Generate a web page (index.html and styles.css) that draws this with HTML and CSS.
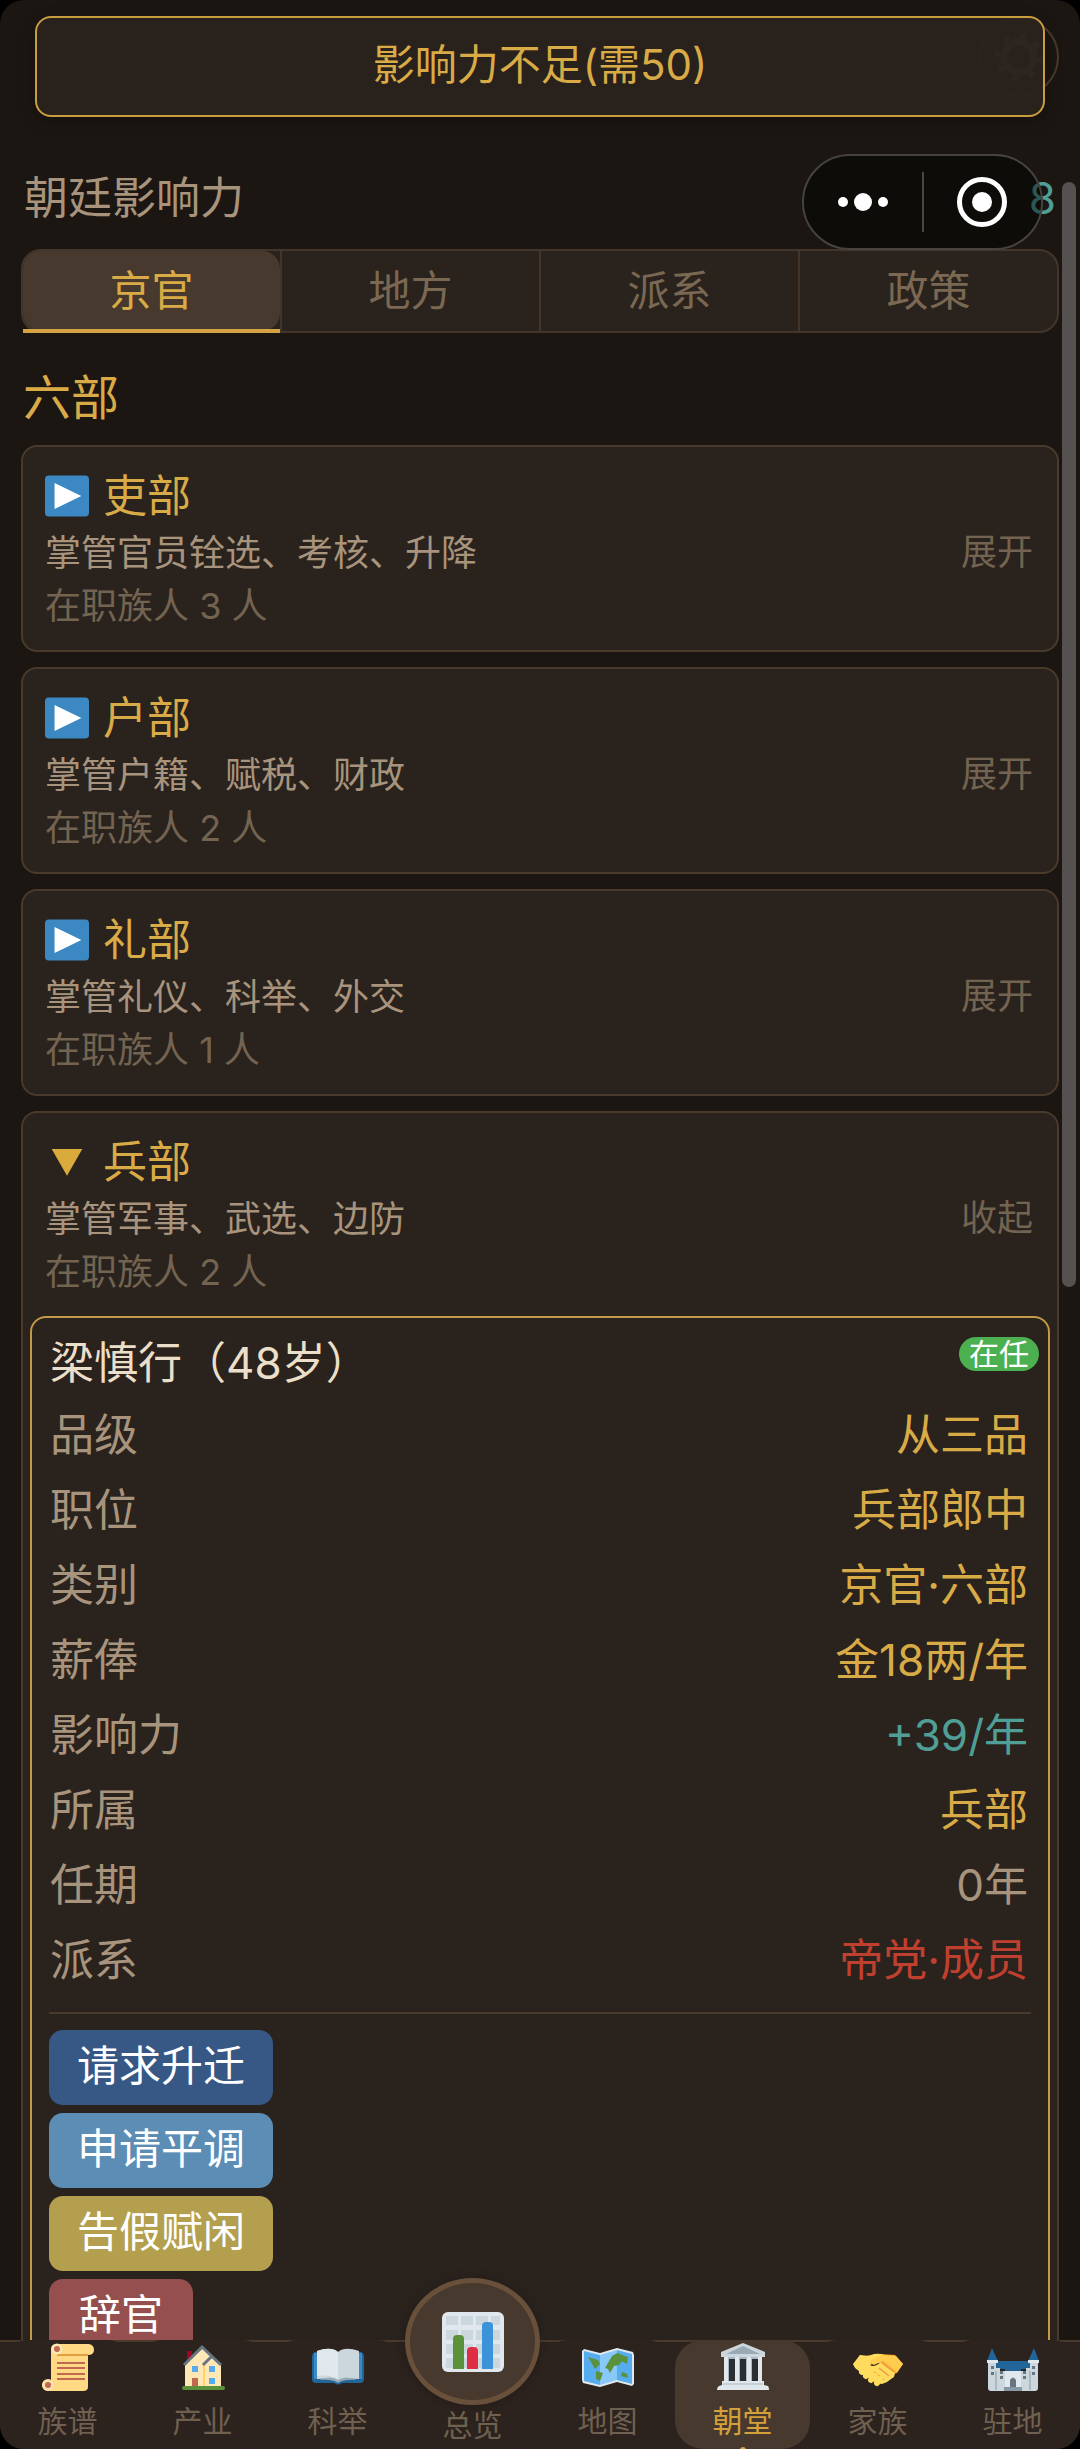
FILE: index.html
```
<!DOCTYPE html>
<html lang="zh-CN">
<head>
    <meta charset="UTF-8">
    <meta name="viewport" content="width=device-width, initial-scale=1.0">
    <title>朝堂</title>
    <link rel="stylesheet" href="styles.css">
</head>
<body>
    <div class="app">
        <main class="page">
            <header class="topbar">
                <button class="settings" aria-label="设置">
                    <svg width="52" height="52" viewBox="0 0 52 52">
                        <circle cx="26" cy="26" r="15" fill="none" stroke="#8a8078" stroke-width="7"/>
                        <circle cx="26" cy="26" r="21" fill="none" stroke="#8a8078" stroke-width="7" stroke-dasharray="6 10.5"/>
                    </svg>
                </button>
            </header>

            <div class="influence">
                <span>朝廷影响力</span>
                <span class="teal">8</span>
            </div>

            <nav class="tabs">
                <button class="tab active">京官</button>
                <button class="tab">地方</button>
                <button class="tab">派系</button>
                <button class="tab">政策</button>
            </nav>

            <h2 class="section-title">六部</h2>

            <div class="ministries">
                <section class="ministry">
                    <button class="ministry-head">
                        <span class="info">
                            <span class="name">
                                <svg class="arrow" viewBox="0 0 46 43"><rect width="46" height="43" rx="4" fill="#3b88c3"/><path d="M10 8v27l28-13.500z" fill="#fff"/></svg>
                                吏部
                            </span>
                            <span class="desc">掌管官员铨选、考核、升降</span>
                            <span class="count">在职族人 3 人</span>
                        </span>
                        <span class="toggle">展开</span>
                    </button>
                </section>

                <section class="ministry">
                    <button class="ministry-head">
                        <span class="info">
                            <span class="name">
                                <svg class="arrow" viewBox="0 0 46 43"><rect width="46" height="43" rx="4" fill="#3b88c3"/><path d="M10 8v27l28-13.500z" fill="#fff"/></svg>
                                户部
                            </span>
                            <span class="desc">掌管户籍、赋税、财政</span>
                            <span class="count">在职族人 2 人</span>
                        </span>
                        <span class="toggle">展开</span>
                    </button>
                </section>

                <section class="ministry">
                    <button class="ministry-head">
                        <span class="info">
                            <span class="name">
                                <svg class="arrow" viewBox="0 0 46 43"><rect width="46" height="43" rx="4" fill="#3b88c3"/><path d="M10 8v27l28-13.500z" fill="#fff"/></svg>
                                礼部
                            </span>
                            <span class="desc">掌管礼仪、科举、外交</span>
                            <span class="count">在职族人 1 人</span>
                        </span>
                        <span class="toggle">展开</span>
                    </button>
                </section>

                <section class="ministry">
                    <button class="ministry-head">
                        <span class="info">
                            <span class="name">
                                <svg class="arrow" viewBox="0 0 46 43"><path d="M7 8h32L23 36z" fill="#d9ab3c"/></svg>
                                兵部
                            </span>
                            <span class="desc">掌管军事、武选、边防</span>
                            <span class="count">在职族人 2 人</span>
                        </span>
                        <span class="toggle">收起</span>
                    </button>

                    <article class="official">
                        <span class="badge">在任</span>
                        <h3 class="official-name">梁慎行（48岁）</h3>
                        <dl class="stats">
                            <div class="stat"><dt>品级</dt><dd>从三品</dd></div>
                            <div class="stat"><dt>职位</dt><dd>兵部郎中</dd></div>
                            <div class="stat"><dt>类别</dt><dd>京官·六部</dd></div>
                            <div class="stat"><dt>薪俸</dt><dd>金18两/年</dd></div>
                            <div class="stat"><dt>影响力</dt><dd class="teal">+39/年</dd></div>
                            <div class="stat"><dt>所属</dt><dd>兵部</dd></div>
                            <div class="stat"><dt>任期</dt><dd class="plain">0年</dd></div>
                            <div class="stat"><dt>派系</dt><dd class="red">帝党·成员</dd></div>
                        </dl>
                        <div class="actions">
                            <button class="btn promote">请求升迁</button>
                            <button class="btn transfer">申请平调</button>
                            <button class="btn leave">告假赋闲</button>
                            <button class="btn resign">辞官</button>
                        </div>
                    </article>
                </section>
            </div>
        </main>

        <nav class="bottom-nav">
            <button class="nav-item">
                <svg class="nav-icon" viewBox="0 0 52 48">
                    <path d="M9 6q0-5 6-5h32q5 1 5 6t-6 5v32q0 4-5 4H7q-6 0-7-6 1-6 9-5z" fill="#ffd983"/>
                    <path d="M15 12h31" stroke="#e39f3d" stroke-width="2"/>
                    <circle cx="15" cy="6" r="5.500" fill="#ffe8b6"/><circle cx="15" cy="6" r="3" fill="#c1694f"/>
                    <circle cx="6" cy="42" r="6" fill="#ffe0ac"/><circle cx="6" cy="42" r="3" fill="#c1694f"/>
                    <path d="M15 20h28M15 25h28M15 31h28M15 36h28" stroke="#c1694f" stroke-width="2"/>
                </svg>
                <span>族谱</span>
            </button>
            <button class="nav-item">
                <svg class="nav-icon" viewBox="0 0 52 48">
                    <rect x="10" y="8" width="5" height="9" fill="#a0041e"/>
                    <path d="M8 21L26 5l18 16v25H8z" fill="#ffe8b6"/>
                    <path d="M27 22v24" stroke="#ffcc4d" stroke-width="1.500"/>
                    <path d="M7 22L25 4l19 18M26 22l9-9" fill="none" stroke="#66757f" stroke-width="3"/>
                    <path d="M15 23h6v6h-6zM32 23h6v6h-6zM32 35h6v6h-6z" fill="#55acee"/>
                    <path d="M15 35h6v9h-6z" fill="#c1694f"/>
                    <rect x="5" y="43" width="43" height="4" rx="2" fill="#5c913b"/>
                </svg>
                <span>产业</span>
            </button>
            <button class="nav-item">
                <svg class="nav-icon" viewBox="0 0 52 48">
                    <path d="M3 9h46q3 1 3 5v22q0 4-4 4H30q-4 3-8 0H4q-4 0-4-4V14q0-4 3-5z" fill="#226699"/>
                    <path d="M2 10h48v26H2z" fill="#55acee" opacity=".5"/>
                    <path d="M5 36V8q14-5 21 1 7-6 21-1v28q-14-2-21 3-8-5-21-3z" fill="#ccd6dd"/>
                    <path d="M5 33V8q14-5 21 1v27q-8-5-21-3z" fill="#e1e8ed"/>
                    <path d="M7 37q12-5 19 0 7-5 19 0-13-1-19 3-6-4-19-3z" fill="#99aab5"/>
                </svg>
                <span>科举</span>
            </button>
            <button class="nav-item center">
                <span class="bubble">
                    <svg width="62" height="60" viewBox="0 0 62 60">
                        <rect width="62" height="60" rx="6" fill="#e1e8ed"/>
                        <path d="M4 4h12v9H4zM19 4h12v9H19zM34 4h12v9H34zM49 4h9v9h-9zM4 18h12v10H4zM19 18h12v10H19zM34 18h12v10H34zM49 18h9v10h-9zM4 32h12v10H4zM19 32h12v10H19zM34 32h12v10H34zM49 32h9v10h-9zM4 46h12v10H4zM19 46h12v10H19zM34 46h12v10H34zM49 46h9v10h-9z" fill="#ccd6dd"/>
                        <path d="M11 57V27q0-4 4-4h3q4 0 4 4v30z" fill="#5c913b"/>
                        <path d="M25 57V39q0-4 4-4h3q4 0 4 4v18z" fill="#dd2e44"/>
                        <path d="M40 57V14q0-4 4-4h3q4 0 4 4v43z" fill="#3b94d9"/>
                    </svg>
                </span>
                <span>总览</span>
            </button>
            <button class="nav-item">
                <svg class="nav-icon" viewBox="0 0 52 48">
                    <path d="M0 8l2-2 16 4 17-5 16 4 1 3v29l-2 2-15-4-17 5L1 40l-1-3z" fill="#e1e8ed"/>
                    <path d="M2 8l16 4v30L2 38zM35 7l15 4v30l-15-4z" fill="#55acee"/>
                    <path d="M18 12l17-5v30l-17 5z" fill="#88c9f9"/>
                    <path d="M6 14l10 3 2 4-5 5-4-7zM14 28l7 2-3 8-4-2zM23 25l7-12 5-3 11 4-1 7-5-3-3 4-5 1-4 7-2-4zM40 29l5 2 1 4-7-2z" fill="#5c913b"/>
                </svg>
                <span>地图</span>
            </button>
            <button class="nav-item active">
                <svg class="nav-icon" viewBox="0 0 52 48">
                    <path d="M26 0l22 9v5H4V9z" fill="#ccd6dd"/>
                    <path d="M26 3l17 8H9z" fill="#99aab5"/>
                    <path d="M7 14h38v25H7z" fill="#aab8c2"/>
                    <path d="M12 16h6v22h-6zM23 16h6v22h-6zM35 16h6v22h-6z" fill="#292f33"/>
                    <path d="M7 14h4v25H7zM18 14h4v25h-4zM30 14h4v25h-4zM41 14h4v25h-4z" fill="#e1e8ed"/>
                    <path d="M5 38h42v4l4 1q1 1 1 4H0q0-3 2-4l3-1z" fill="#e1e8ed"/>
                    <path d="M6 41h40" stroke="#aab8c2"/>
                </svg>
                <span>朝堂</span>
            </button>
            <button class="nav-item">
                <svg class="nav-icon" viewBox="0 0 52 48">
                    <path d="M1 22L8 12q9 2 15 0l4-1 16 1 8 9-6 9-4 1-15-12-13 5z" fill="#ffac33"/>
                    <path d="M8 12q8 2 14-1 6-1 10 1l-12 5-2 5q4 3 11-3l14 11-1 4-3 2-4 3-5 2-6-1-12-8-9-7-2-4z" fill="#ffdc5d"/>
                    <path d="M20 17l10-5 14 1 7 8-6 8-14-11-9 4q-4-1-2-5z" fill="#ffcc4d"/>
                    <path d="M29 19l13 10M27 25l10 8M22 29l10 8" stroke="#ef9645" stroke-width="1.500"/>
                    <path d="M10 29l3-3M14 33l4-4M19 37l4-4M25 40l3-4" stroke="#ffdc5d" stroke-width="6" stroke-linecap="round"/>
                </svg>
                <span>家族</span>
            </button>
            <button class="nav-item">
                <svg class="nav-icon" viewBox="0 0 52 48">
                    <path d="M9 18h34v8H9z" fill="#226699"/>
                    <path d="M1 18h8v7h4v3h6v-4h14v4h6v-3h4v-7h8v27q0 3-3 3H4q-3 0-3-3z" fill="#ccd6dd"/>
                    <path d="M18 25h16v22H18z" fill="#e1e8ed"/>
                    <path d="M18 24h16v4H18z" fill="#226699"/>
                    <path d="M9 28v19M43 28v19" stroke="#aab8c2" stroke-width="2"/>
                    <path d="M0 18L5 5l6 13zM41 18l6-13 5 13z" fill="#226699"/>
                    <path d="M0 17h11v3H0zM41 17h11v3H41z" fill="#e1e8ed"/>
                    <path d="M4 23h3v3H4zM4 29h3v3H4zM13 28h3v3h-3zM13 33h3v3h-3zM45 23h3v3h-3zM45 29h3v3h-3zM36 28h3v3h-3zM36 33h3v3h-3z" fill="#66757f"/>
                    <path d="M23 47V37q3-5 6 0v10z" fill="#66757f"/>
                    <path d="M17 44h18v4H17z" fill="#8899a6"/>
                </svg>
                <span>驻地</span>
            </button>
        </nav>

        <div class="toast" role="status">影响力不足(需50)</div>

        <div class="capsule">
            <button aria-label="更多">
                <svg width="52" height="52" viewBox="0 0 52 52" fill="#fff"><circle cx="6" cy="26" r="5"/><circle cx="26" cy="26" r="9"/><circle cx="46" cy="26" r="5"/></svg>
            </button>
            <span class="divider"></span>
            <button aria-label="关闭">
                <svg width="52" height="52" viewBox="0 0 52 52"><circle cx="26" cy="26" r="22.500" fill="none" stroke="#fff" stroke-width="5"/><circle cx="26" cy="26" r="10" fill="#fff"/></svg>
            </button>
        </div>

        <div class="scrollbar"></div>
    </div>
</body>
</html>
```
FILE: styles.css
```
* {
    box-sizing: border-box;
    margin: 0;
    padding: 0;
}
body {
    background: #000;
    color: #a8947c;
    font-family: Inter, "Noto Sans CJK SC", sans-serif;
    font-size: 44px;
    font-weight: 400;
}
button {
    font: inherit;
    color: inherit;
    background: none;
    border: none;
    cursor: pointer;
}
svg {
    display: block;
}
.app {
    position: relative;
    display: flex;
    flex-direction: column;
    height: 100vh;
    background: #1b1612;
    border-radius: 24px;
    overflow: hidden;
}
.page {
    flex: 1;
    min-height: 0;
    padding: 0 21px;
    overflow: hidden;
}

/* header */
.topbar {
    display: flex;
    justify-content: flex-end;
    padding: 17px 0 69px;
}
.settings {
    display: flex;
    align-items: center;
    justify-content: center;
    width: 80px;
    height: 80px;
    border: 2px solid #4a3a2c;
    border-radius: 50%;
}
.influence {
    display: flex;
    justify-content: space-between;
    line-height: 64px;
    padding: 0 3px;
}
.teal {
    color: #4f9f96;
}

/* tabs */
.tabs {
    display: flex;
    margin-top: 19px;
    border: 2px solid #43352a;
    border-radius: 20px;
    background: #2a221d;
}
.tab {
    position: relative;
    flex: 1;
    font-size: 42px;
    line-height: 80px;
    color: #7a6853;
    border-left: 2px solid #43352a;
}
.tab:first-child {
    border-left: none;
}
.tab.active {
    color: #d9ab47;
    background: #47392d;
    border-radius: 18px;
}
.tab.active::after {
    content: "";
    position: absolute;
    left: 0;
    right: 0;
    bottom: -2px;
    height: 4px;
    background: #d4a444;
}
.section-title {
    margin: 33px 0 15px;
    padding-left: 2px;
    font-size: 48px;
    font-weight: 400;
    line-height: 64px;
    color: #d9ab47;
}

/* ministries */
.ministries {
    display: flex;
    flex-direction: column;
    gap: 15px;
}
.ministry {
    background: #2a221d;
    border: 2px solid #4a3a2c;
    border-radius: 16px;
}
.ministry-head {
    display: flex;
    align-items: center;
    justify-content: space-between;
    width: 100%;
    padding: 19px 24px 18px 22px;
    text-align: left;
}
.info {
    display: flex;
    flex-direction: column;
}
.name {
    display: flex;
    align-items: center;
    gap: 14px;
    line-height: 60px;
    color: #d9ab47;
}
.arrow {
    width: 44px;
    height: 42px;
}
.desc {
    font-size: 36px;
    line-height: 54px;
}
.count {
    font-size: 36px;
    line-height: 52px;
    color: #736451;
}
.toggle {
    font-size: 36px;
    color: #736451;
}

/* official card */
.official {
    position: relative;
    margin: 0 7px 7px;
    padding: 13px 17px;
    border: 2px solid #c39a45;
    border-radius: 16px;
}
.official-name {
    padding-left: 1px;
    font-size: 44px;
    font-weight: 400;
    line-height: 64px;
    color: #ecdfca;
}
.badge {
    position: absolute;
    top: 19px;
    right: 9px;
    padding: 0 10px;
    border-radius: 17px;
    background: #4caf50;
    color: #fff;
    font-size: 30px;
    line-height: 34px;
}
.stats {
    padding: 3px 3px 14px 1px;
    border-bottom: 2px solid #4a3a2c;
}
.stat {
    display: flex;
    justify-content: space-between;
    line-height: 75px;
}
.stat dd {
    color: #d9ab47;
}
.stat .plain {
    color: #a8947c;
}
.stat .teal {
    color: #4f9f96;
}
.stat .red {
    color: #c0402f;
}
.actions {
    display: flex;
    flex-direction: column;
    align-items: flex-start;
    gap: 8px;
    padding-top: 16px;
}
.btn {
    min-width: 144px;
    padding: 0 28px 3px;
    border-radius: 14px;
    color: #fff;
    font-size: 42px;
    line-height: 72px;
}
.promote {
    background: #375785;
}
.transfer {
    background: #5b8db5;
}
.leave {
    background: #b39f4e;
}
.resign {
    background: #954f4f;
}

/* bottom navigation */
.bottom-nav {
    display: flex;
    height: 109px;
    background: #2c221e;
    border-top: 2px solid #4a3a2c;
}
.nav-item {
    position: relative;
    flex: 1;
    display: flex;
    flex-direction: column;
    align-items: center;
    justify-content: flex-end;
    gap: 10px;
    margin-top: -2px;
    padding-bottom: 8px;
    border-radius: 28px;
    background: #2c221e;
    color: #6f604f;
    font-size: 30px;
    line-height: 40px;
}
.nav-item.active {
    background: #47392d;
    color: #d4a03c;
}
.nav-item.active::after {
    content: "";
    position: absolute;
    bottom: -4px;
    left: 50%;
    width: 6px;
    height: 6px;
    margin-left: -3px;
    border-radius: 50%;
    background: #d4a444;
}
.nav-icon {
    width: 52px;
    height: 48px;
}
.nav-item.center {
    gap: 0;
    padding-bottom: 4px;
}
.bubble {
    display: flex;
    flex-shrink: 0;
    align-items: center;
    justify-content: center;
    width: 100%;
    height: 127px;
    border: 5px solid #69503a;
    border-radius: 50%;
    background: #47392d;
    box-shadow: 0 0 12px rgba(0, 0, 0, 0.2);
}

/* overlays */
.toast {
    position: absolute;
    top: 16px;
    left: 35px;
    right: 35px;
    padding-bottom: 3px;
    border: 2px solid #c99c40;
    border-radius: 16px;
    background: rgba(42, 34, 29, 0.97);
    box-shadow: 0 4px 16px rgba(0, 0, 0, 0.25);
    color: #d9ab47;
    font-size: 42px;
    line-height: 94px;
    text-align: center;
}
.capsule {
    position: absolute;
    top: 154px;
    right: 37px;
    display: flex;
    align-items: center;
    width: 241px;
    height: 96px;
    border: 2px solid #454240;
    border-radius: 48px;
    background: rgba(0, 0, 0, 0.45);
}
.capsule button {
    flex: 1;
    display: flex;
    justify-content: center;
}
.divider {
    width: 2px;
    height: 60px;
    background: #4a4745;
}
.scrollbar {
    position: absolute;
    top: 182px;
    right: 4px;
    width: 14px;
    height: 1105px;
    border-radius: 7px;
    background: #555150;
}
```
